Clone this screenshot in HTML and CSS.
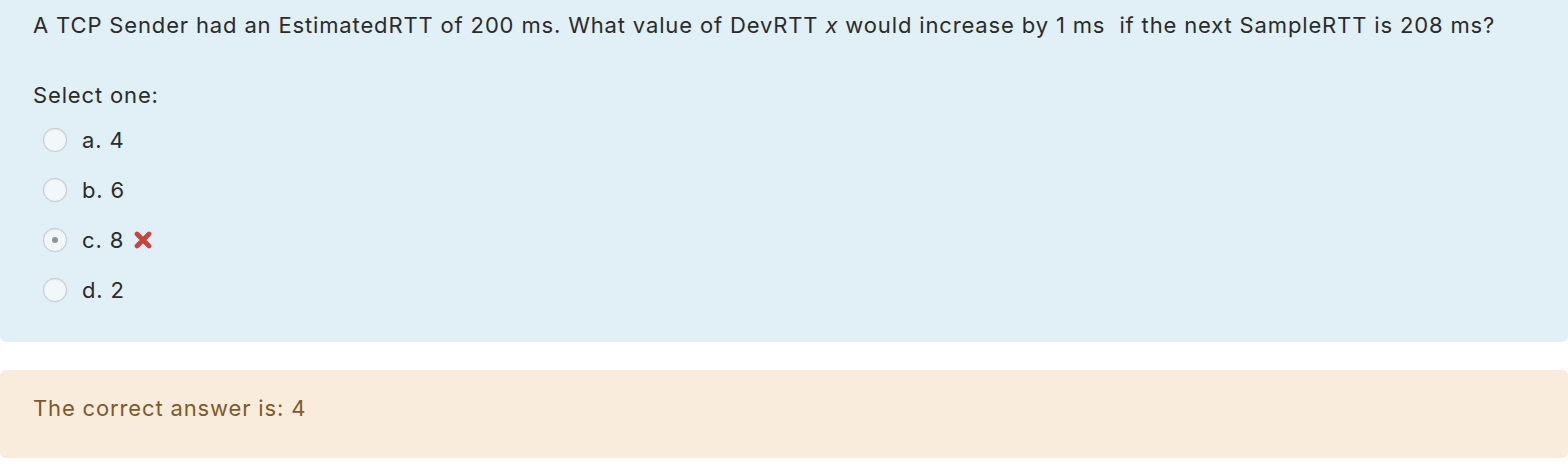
FILE: index.html
```html
<!DOCTYPE html>
<html>
<head>
<meta charset="utf-8">
<link rel="stylesheet" href="styles.css">
</head>
<body>
<div class="formulation">
  <p class="qtext">A TCP Sender had an EstimatedRTT of 200 ms. What value of DevRTT <i>x</i> would increase by 1 ms&nbsp; if the next SampleRTT is 208 ms?</p>
  <p class="prompt">Select one:</p>
  <div class="answers">
    <div class="option"><span class="radio"></span><span class="label">a. 4</span></div>
    <div class="option"><span class="radio"></span><span class="label">b. 6</span></div>
    <div class="option"><span class="radio checked"></span><span class="label">c. 8</span>
      <svg class="cross" width="18" height="18" viewBox="0 0 18 18"><path d="M3 3 L15 15 M15 3 L3 15" stroke="#c9443a" stroke-width="4.6" stroke-linecap="round"/></svg>
    </div>
    <div class="option"><span class="radio"></span><span class="label">d. 2</span></div>
  </div>
</div>
<div class="outcome">
  <p class="rightanswer">The correct answer is: 4</p>
</div>
</body>
</html>
```
FILE: styles.css
```css
html, body {
  margin: 0;
  padding: 0;
  background: #ffffff;
}
body {
  font-family: Inter, "Open Sans", "Liberation Sans", sans-serif;
  font-size: 22px;
  letter-spacing: 0.85px;
  color: #2b2b2b;
}
.formulation {
  background: #e1eff7;
  padding: 0 33px 27px 33px;
  border-radius: 0 0 6px 6px;
}
.qtext {
  margin: 0;
  line-height: 50px;
}
.prompt {
  margin: 30px 0 0 0;
  line-height: 30px;
}
.answers {
  margin-top: 5px;
  display: flex;
  flex-direction: column;
}
.option {
  height: 50px;
  display: flex;
  align-items: center;
  padding-left: 10px;
}
.radio {
  width: 22px;
  height: 22px;
  border: 1px solid #c8cccf;
  border-radius: 50%;
  background: #f2f7fa;
  box-shadow: 0 0 1px rgba(0,0,0,0.12), inset 0 1px 2px rgba(0,0,0,0.05);
  display: flex;
  align-items: center;
  justify-content: center;
  flex: none;
}
.radio.checked::after {
  content: "";
  width: 6px;
  height: 6px;
  border-radius: 50%;
  background: #8e9498;
}
.label {
  margin-left: 15px;
}
.cross {
  margin-left: 10px;
}
.outcome {
  margin-top: 28px;
  background: #f9ecdc;
  border-radius: 6px;
  height: 88px;
  padding: 24px 33px 0 33px;
  box-sizing: border-box;
}
.rightanswer {
  margin: 0;
  line-height: 28px;
  color: #7d5a29;
}
```
